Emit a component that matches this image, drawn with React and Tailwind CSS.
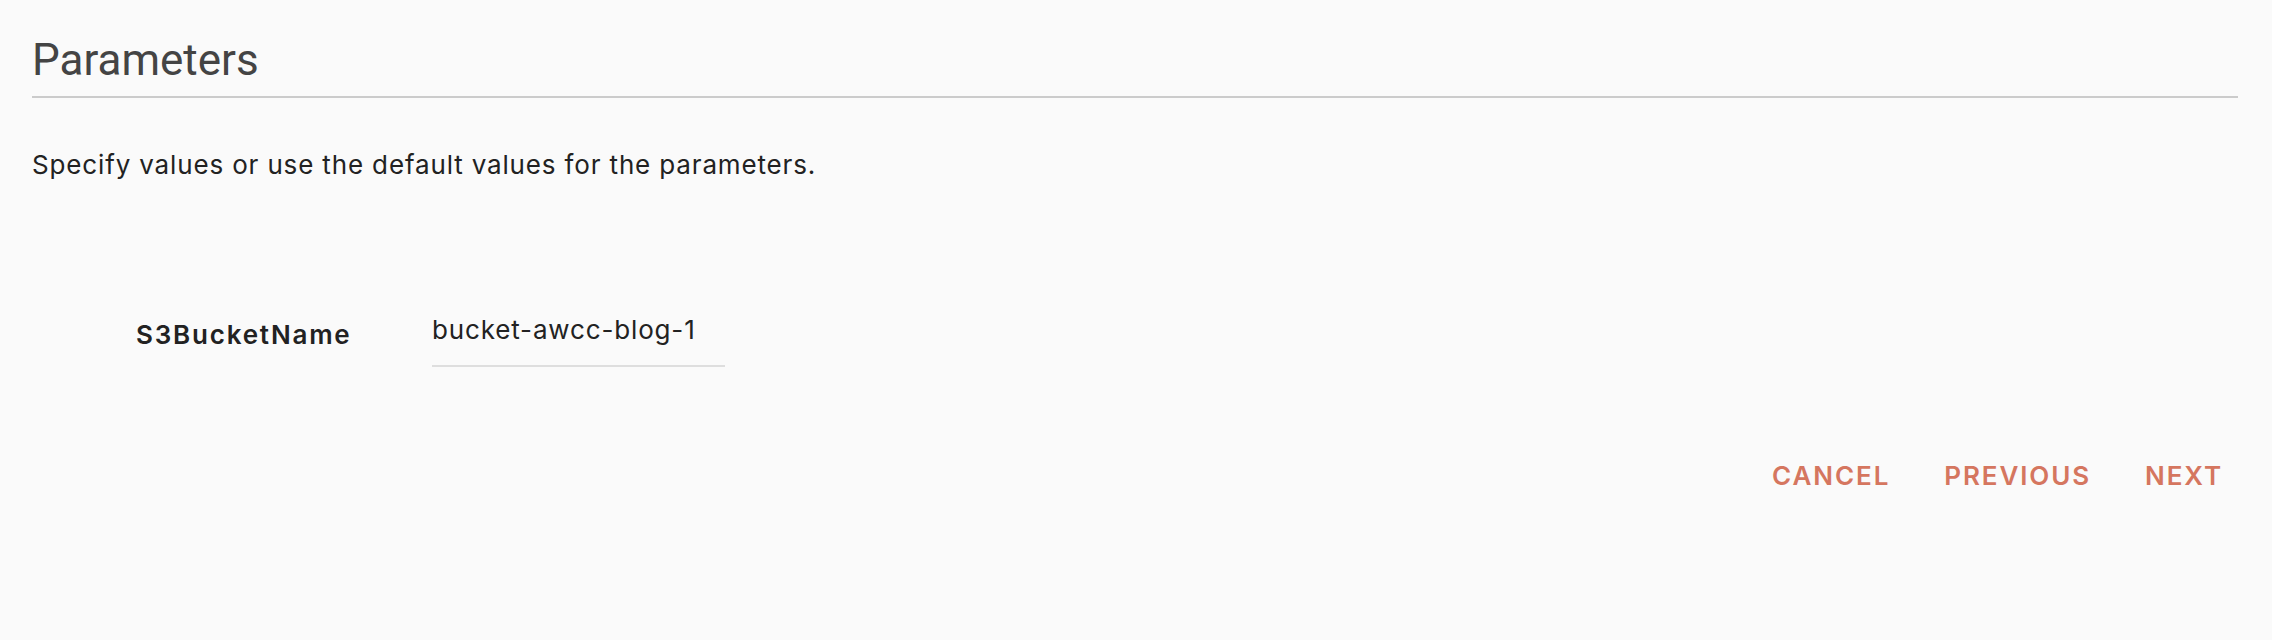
export default function App() {
  return (
    <div className="min-h-[640px] bg-[#fafafa] pl-[32px] pr-[34px] font-['Inter',sans-serif]">
      <h1 className="pt-[38px] pb-[14px] text-[44px] leading-[44px] font-normal font-['Roboto',sans-serif] text-[#444444] border-b-2 border-[#cbcbcb]">
        Parameters
      </h1>
      <p className="mt-[51px] text-[26px] leading-[32px] tracking-[0.85px] text-[#222222]">
        Specify values or use the default values for the parameters.
      </p>
      <div className="mt-[133px] flex items-start">
        <label className="ml-[104px] mt-[5px] w-[296px] text-[26px] leading-[32px] font-semibold tracking-[1.8px] text-[#222222]">
          S3BucketName
        </label>
        <div className="w-[293px] pb-[19px] border-b-2 border-[#dedede] text-[26px] leading-[32px] tracking-[0.85px] text-[#222222]">
          bucket-awcc-blog-1
        </div>
      </div>
      <div className="mt-[93px] flex justify-end gap-[18px]">
        <button className="px-[18px] text-[26px] leading-[32px] font-semibold tracking-[1.9px] text-[#d5765f]">
          CANCEL
        </button>
        <button className="px-[18px] text-[26px] leading-[32px] font-semibold tracking-[1.9px] text-[#d5765f]">
          PREVIOUS
        </button>
        <button className="pl-[18px] pr-[15px] text-[26px] leading-[32px] font-semibold tracking-[1.9px] text-[#d5765f]">
          NEXT
        </button>
      </div>
    </div>
  );
}
